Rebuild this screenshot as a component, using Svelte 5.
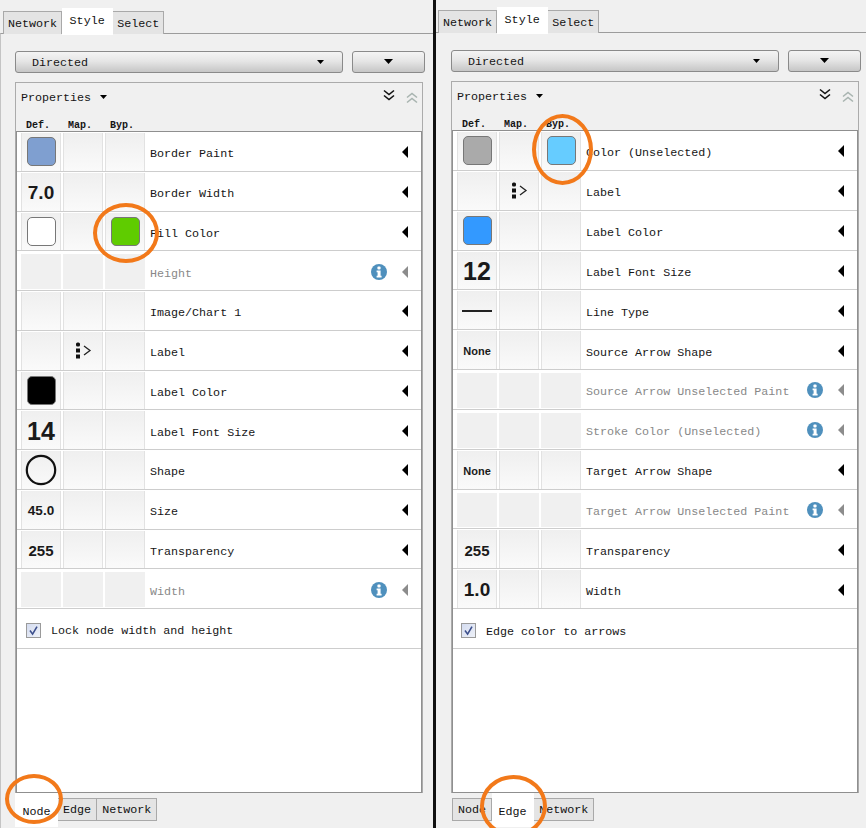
<script>
  const nodeRows = [
    { def: { swatch: "#7f9fd0" }, label: "Border Paint" },
    { def: { big: "7.0", size: 19 }, label: "Border Width" },
    { def: { swatch: "#ffffff" }, byp: "#5fcc00", label: "Fill Color" },
    { off: true, label: "Height" },
    { label: "Image/Chart 1" },
    { map: true, label: "Label" },
    { def: { swatch: "#000000" }, label: "Label Color" },
    { def: { big: "14", size: 25 }, label: "Label Font Size" },
    { def: { circle: true }, label: "Shape" },
    { def: { big: "45.0", size: 13.5 }, label: "Size" },
    { def: { big: "255", size: 15 }, label: "Transparency" },
    { off: true, label: "Width" }
  ];

  const edgeRows = [
    { def: { swatch: "#aaaaaa" }, byp: "#66ccff", label: "Color (Unselected)" },
    { map: true, label: "Label" },
    { def: { swatch: "#3399ff" }, label: "Label Color" },
    { def: { big: "12", size: 25 }, label: "Label Font Size" },
    { def: { line: true }, label: "Line Type" },
    { def: { big: "None", size: 11 }, label: "Source Arrow Shape" },
    { off: true, label: "Source Arrow Unselected Paint" },
    { off: true, label: "Stroke Color (Unselected)" },
    { def: { big: "None", size: 11 }, label: "Target Arrow Shape" },
    { off: true, label: "Target Arrow Unselected Paint" },
    { def: { big: "255", size: 15 }, label: "Transparency" },
    { def: { big: "1.0", size: 19 }, label: "Width" }
  ];
</script>

{#snippet tabStrip(names, active, cls)}
  <div class="tabs {cls}">
    {#each names as name}
      <div class="tab" class:active={name === active}>{name}</div>
    {/each}
  </div>
{/snippet}

{#snippet caret(cls)}
  <svg class={cls} width="7" height="4" viewBox="0 0 7 4"><path d="M0 0h7L3.5 4z" fill="#000" /></svg>
{/snippet}

{#snippet row(r)}
  <div class="row" class:off={r.off}>
    <div class="cell">
      {#if r.def?.swatch}
        <span class="swatch" style="background: {r.def.swatch}"></span>
      {:else if r.def?.big}
        <span class="big" style="font-size: {r.def.size}px">{r.def.big}</span>
      {:else if r.def?.circle}
        <svg width="32" height="32" viewBox="0 0 32 32"><circle cx="16" cy="16" r="14.2" fill="none" stroke="#111" stroke-width="2.2" /></svg>
      {:else if r.def?.line}
        <span class="line"></span>
      {/if}
    </div>
    <div class="cell">
      {#if r.map}
        <svg width="18" height="17" viewBox="0 0 18 17">
          <rect x="2" y="0.5" width="4" height="4" rx="1.5" fill="#111" />
          <rect x="2" y="6.5" width="4" height="4" fill="#111" />
          <rect x="2" y="12.5" width="4" height="4" fill="#111" />
          <path d="M10 4l6 4.5-6 4.5" fill="none" stroke="#222" stroke-width="1.3" />
        </svg>
      {/if}
    </div>
    <div class="cell">
      {#if r.byp}
        <span class="swatch" style="background: {r.byp}"></span>
      {/if}
    </div>
    <div class="name">{r.label}</div>
    {#if r.off}
      <svg class="info" width="16" height="16" viewBox="0 0 16 16">
        <circle cx="8" cy="8" r="8" fill="#4f90bd" />
        <rect x="6.4" y="2.6" width="3.2" height="2.8" rx="1" fill="#fff" />
        <path d="M5.6 6.6h4v5.2h1v1.6H5.6v-1.6h1v-3.6h-1z" fill="#fff" />
      </svg>
    {/if}
    <svg class="arrow" width="6" height="12" viewBox="0 0 6 12"><path d="M6 0v12L0 6z" fill={r.off ? "#8c8c8c" : "#000"} /></svg>
  </div>
{/snippet}

{#snippet pane(cls, rows, active, checkLabel)}
  <section class="pane {cls}">
    {@render tabStrip(["Network", "Style", "Select"], "Style", "top")}
    <div class="body">
      <div class="selectors">
        <div class="dropdown">
          <span class="dropdown-text">Directed</span>
          {@render caret("")}
        </div>
        <div class="menu-btn">
          <svg width="9" height="5" viewBox="0 0 9 5"><path d="M0 0h9L4.5 5z" fill="#000" /></svg>
        </div>
      </div>
      <div class="props">
        <div class="props-head">
          <span class="props-title">Properties</span>
          {@render caret("props-caret")}
          <span class="spacer"></span>
          <svg class="chev-down" width="14" height="13" viewBox="0 0 14 13"><path d="M2 1.5l5 4 5-4M2 6.5l5 4 5-4" fill="none" stroke="#111" stroke-width="1.6" /></svg>
          <svg width="14" height="13" viewBox="0 0 14 13"><path d="M2 6.5l5-4 5 4M2 11.5l5-4 5 4" fill="none" stroke="#a8b4b0" stroke-width="1.6" /></svg>
        </div>
        <div class="cols">
          <span>Def.</span><span>Map.</span><span>Byp.</span>
        </div>
        <div class="table">
          {#each rows as r}
            {@render row(r)}
          {/each}
          <div class="check-row">
            <span class="check">
              <svg width="13" height="13" viewBox="0 0 13 13"><path d="M3 6.5l2.6 3.6L10 2.6" fill="none" stroke="#3c4f8c" stroke-width="1.6" /></svg>
            </span>
            <span class="check-label">{checkLabel}</span>
          </div>
        </div>
      </div>
      {@render tabStrip(["Node", "Edge", "Network"], active, "bottom")}
    </div>
    <div class="ring ring-byp"></div>
    <div class="ring ring-tab"></div>
  </section>
{/snippet}

<div class="screen">
  {@render pane("node", nodeRows, "Node", "Lock node width and height")}
  <div class="divider"></div>
  {@render pane("edge", edgeRows, "Edge", "Edge color to arrows")}
</div>

<style>
  :global(body) {
    margin: 0;
    background: #f0f0f0;
  }
  .screen {
    display: flex;
    width: 866px;
    height: 828px;
    overflow: hidden;
    font-family: "Liberation Mono", monospace;
    font-size: 11.7px;
    color: #151515;
    background: #f0f0f0;
  }
  .divider {
    width: 3px;
    flex: none;
    background: #111;
  }
  .pane {
    position: relative;
    display: flex;
    flex-direction: column;
    flex: none;
    height: 828px;
    box-sizing: border-box;
  }
  .pane.node {
    width: 433px;
    padding-top: 8px;
  }
  .pane.edge {
    width: 430px;
    padding-top: 7px;
  }
  .tabs {
    display: flex;
    align-items: flex-start;
    flex: none;
  }
  .tabs.top {
    height: 25px;
    margin-left: 3px;
    position: relative;
    z-index: 1;
  }
  .edge .tabs.top {
    margin-left: 2px;
  }
  .tab {
    padding: 0 4px;
    box-sizing: content-box;
    border: 1px solid #a9a9a9;
    border-left-width: 0;
    background: #e4e4e4;
    white-space: nowrap;
    color: #111;
  }
  .tab:first-child {
    border-left-width: 1px;
  }
  .tab.active {
    padding: 0 7.5px;
    background: #fff;
    border-color: transparent;
  }
  .tabs.top .tab {
    height: 22px;
    line-height: 24px;
    margin-top: 3px;
    border-bottom: 0;
  }
  .tabs.top .tab.active {
    height: 26px;
    line-height: 24px;
    margin-top: 0;
    background: #fff;
  }
  .body {
    display: flex;
    flex-direction: column;
    flex: 1;
    min-height: 0;
    border-top: 1px solid #9c9c9c;
    padding: 17px 0 0 15px;
  }
  .node .body {
    border-left: 1px solid #c4c4c4;
    padding-left: 14px;
  }
  .selectors {
    display: flex;
    gap: 9px;
    width: 410px;
    height: 22px;
    flex: none;
  }
  .dropdown,
  .menu-btn {
    display: flex;
    align-items: center;
    box-sizing: border-box;
    border: 1px solid #8a8a8a;
    border-radius: 3px;
    background: linear-gradient(#f4f4f4, #e6e6e6 45%, #c6c6c6);
  }
  .dropdown {
    flex: 1;
    justify-content: space-between;
    padding: 0 18px 0 16px;
  }
  .dropdown-text {
    padding-top: 2px;
  }
  .menu-btn {
    width: 73px;
    flex: none;
    justify-content: center;
    padding-bottom: 2px;
  }
  .props {
    display: flex;
    flex-direction: column;
    flex: 1;
    min-height: 0;
    width: 408px;
    margin-top: 9px;
    box-sizing: border-box;
    border: 1px solid #ababab;
    border-bottom: 0;
  }
  .props-head {
    display: flex;
    align-items: center;
    gap: 9px;
    height: 28px;
    padding: 0 3px 0 5px;
    flex: none;
  }
  .props-title {
    padding-top: 2px;
  }
  .props-head .spacer {
    flex: 1;
  }
  .chev-down {
    margin-bottom: 4px;
  }
  .cols {
    display: flex;
    gap: 17px;
    height: 20px;
    padding-left: 10px;
    flex: none;
    font-size: 10px;
    font-weight: 700;
    line-height: 29px;
  }
  .cols span {
    width: 25px;
  }
  .table {
    flex: 1;
    min-height: 0;
    background: #fff;
    border: 1px solid #8f8f8f;
  }
  .row {
    display: flex;
    align-items: stretch;
    gap: 2px;
    height: 39.75px;
    box-sizing: border-box;
    padding: 1px 13px 0 4px;
    border-bottom: 1px solid #cdcdcd;
  }
  .edge .row {
    height: 39.85px;
  }
  .cell {
    display: flex;
    align-items: center;
    justify-content: center;
    width: 40px;
    flex: none;
    box-sizing: border-box;
    border-left: 1px solid #e2e2e2;
    border-right: 1px solid #e2e2e2;
    background: linear-gradient(#efefef, #fafafa);
  }
  .off .cell {
    border-color: transparent;
    background: #f0f0f0;
    margin-top: 2px;
    margin-bottom: 1px;
  }
  .swatch {
    width: 29px;
    height: 29px;
    box-sizing: border-box;
    border: 1px solid #777;
    border-radius: 5px;
  }
  .big {
    padding-top: 2px;
    font-family: "Liberation Sans", sans-serif;
    font-weight: 700;
    color: #1a1a1a;
  }
  .line {
    width: 30px;
    height: 2px;
    margin-top: 2px;
    background: #222;
  }
  .name {
    flex: 1;
    margin-left: 3px;
    padding-top: 5px;
    align-self: center;
    white-space: nowrap;
  }
  .off .name {
    color: #888;
  }
  .info {
    align-self: center;
    margin-top: 1px;
    margin-right: 13px;
    flex: none;
  }
  .arrow {
    align-self: center;
    margin-top: 1px;
    flex: none;
  }
  .check-row {
    display: flex;
    align-items: center;
    gap: 10px;
    height: 39.75px;
    box-sizing: border-box;
    padding-left: 9px;
    border-bottom: 1px solid #cdcdcd;
  }
  .edge .check-row {
    padding-left: 8px;
    height: 39.85px;
  }
  .check-label {
    padding-top: 6px;
  }
  .check {
    display: flex;
    width: 15px;
    height: 15px;
    margin-top: 4px;
    box-sizing: border-box;
    border: 1px solid #9a9a9a;
    background: linear-gradient(135deg, #d4dcf0, #eef1f8);
    align-items: center;
    justify-content: center;
  }
  .tabs.bottom {
    height: 35px;
    margin-left: 0;
    flex: none;
  }
  .edge .tabs.bottom {
    margin-left: 1px;
  }
  .tabs.bottom .tab {
    height: 21px;
    padding: 0 5px;
    line-height: 22px;
    margin-top: 5px;
    border-top: 1px solid #a9a9a9;
  }
  .tabs.bottom .tab.active {
    height: 32px;
    padding: 0 6.5px;
    line-height: 37px;
    margin-top: 0;
    border-color: transparent;
  }
  .ring {
    position: absolute;
    box-sizing: border-box;
    border: 4px solid #f2791a;
    border-radius: 50%;
    pointer-events: none;
    z-index: 2;
  }
  .node .ring-byp {
    left: 93px;
    top: 203px;
    width: 66px;
    height: 60px;
  }
  .node .ring-tab {
    left: 5px;
    top: 774px;
    width: 58px;
    height: 50px;
  }
  .edge .ring-byp {
    left: 96px;
    top: 114px;
    width: 61px;
    height: 71px;
  }
  .edge .ring-tab {
    left: 44px;
    top: 775px;
    width: 67px;
    height: 62px;
  }
</style>
